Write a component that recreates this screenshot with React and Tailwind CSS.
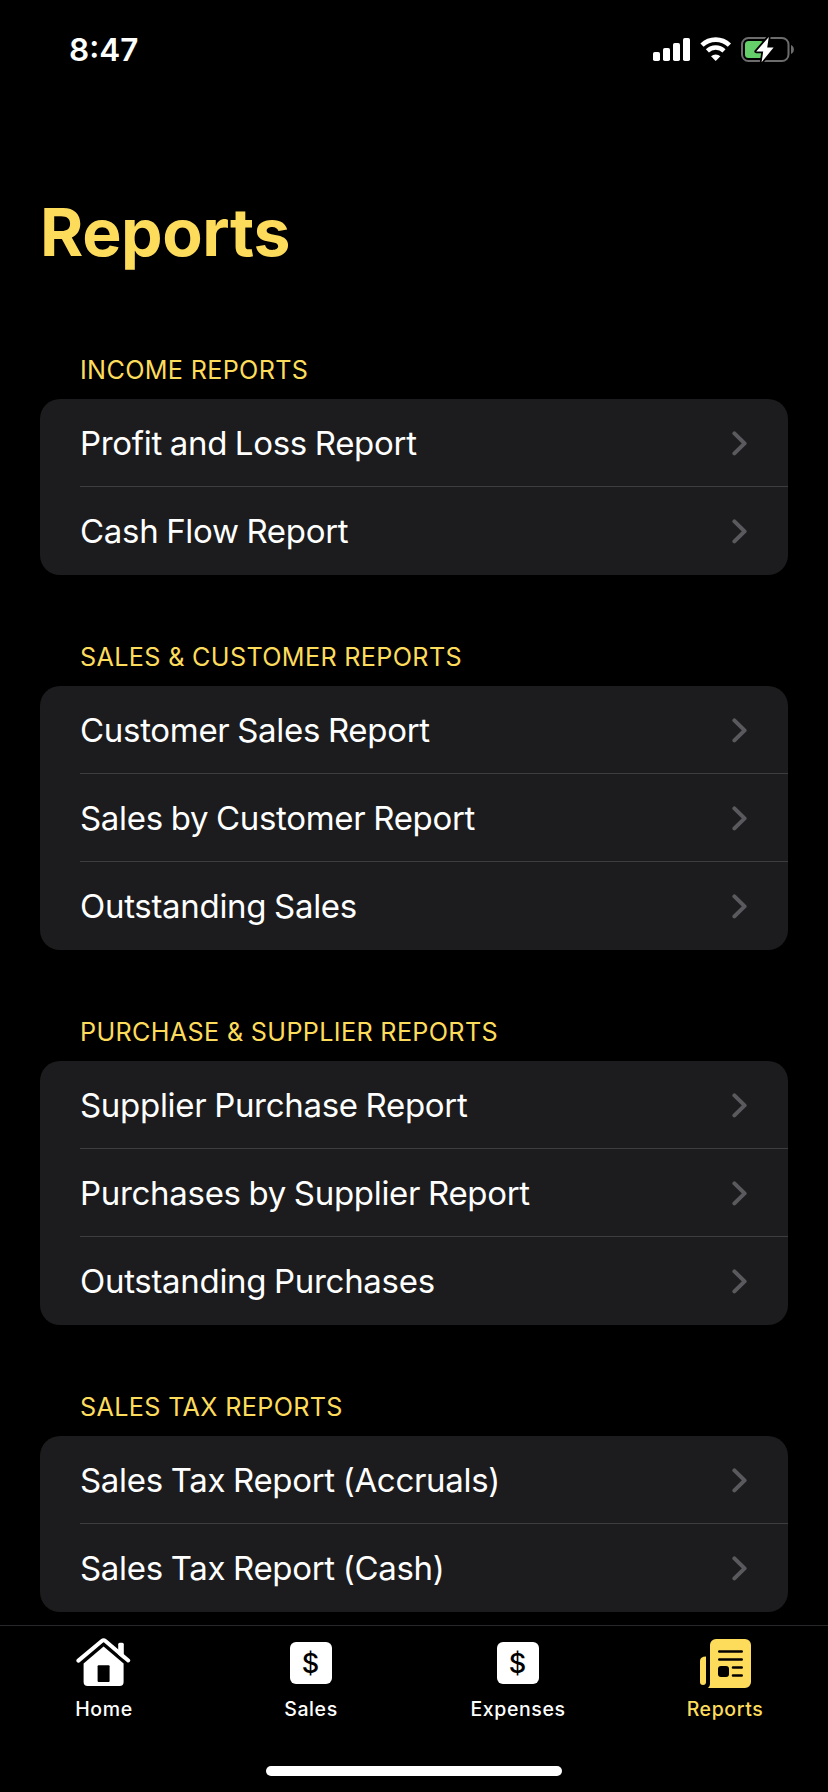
import React from "react";

const sections = [
  {
    title: "INCOME REPORTS",
    items: ["Profit and Loss Report", "Cash Flow Report"],
  },
  {
    title: "SALES & CUSTOMER REPORTS",
    items: ["Customer Sales Report", "Sales by Customer Report", "Outstanding Sales"],
  },
  {
    title: "PURCHASE & SUPPLIER REPORTS",
    items: ["Supplier Purchase Report", "Purchases by Supplier Report", "Outstanding Purchases"],
  },
  {
    title: "SALES TAX REPORTS",
    items: ["Sales Tax Report (Accruals)", "Sales Tax Report (Cash)"],
  },
];

const StatusBar = () => (
  <div className="flex h-[100px] items-center justify-between pl-[69px] pr-[34px]">
    <span className="text-[31.5px] leading-[40px] font-semibold text-white">8:47</span>
    <div className="flex items-center">
      <svg width="38" height="26" viewBox="0 0 38 26" fill="#fff">
        <rect x="0" y="15" width="7" height="9" rx="1.8" />
        <rect x="10" y="11" width="7" height="13" rx="1.8" />
        <rect x="20" y="6" width="7" height="18" rx="1.8" />
        <rect x="30" y="1" width="7" height="23" rx="1.8" />
      </svg>
      <svg className="ml-[9px]" width="32" height="26" viewBox="0 0 32 26" fill="none">
        <path d="M2 8.2A19.6 19.6 0 0 1 29.4 8.2" stroke="#fff" strokeWidth="4.6" />
        <path d="M7.4 13.9A12 12 0 0 1 24 13.9" stroke="#fff" strokeWidth="4.4" />
        <path d="M15.7 24L11 19.3A7 7 0 0 1 20.4 19.3Z" fill="#fff" />
      </svg>
      <svg className="ml-[9px]" width="53" height="28" viewBox="0 0 53 28" fill="none">
        <rect x="1" y="2" width="46.5" height="23" rx="6.5" stroke="#6c6c6c" strokeWidth="2" />
        <path d="M50 9C53.8 10.5 53.8 16.5 50 18Z" fill="#6c6c6c" />
        <rect x="4" y="5" width="19" height="17" rx="3.5" fill="#65cf6a" />
        <path
          d="M27.8 1L15.2 15.4H22.2L20.6 26.2L32.6 11.6H26.2Z"
          fill="#fff"
          stroke="#000"
          strokeWidth="3.6"
          strokeLinejoin="round"
          paintOrder="stroke"
        />
      </svg>
    </div>
  </div>
);

const Chevron = () => (
  <svg width="16" height="26" viewBox="0 0 16 26" fill="none">
    <path d="M2.4 3.4L12.6 13.4L2.4 23.4" stroke="#5a5a5e" strokeWidth="4" strokeLinecap="round" strokeLinejoin="round" />
  </svg>
);

const Section = ({ title, items }) => (
  <section>
    <h2 className="h-[29px] pl-10 text-[25.2px] leading-[29px] tracking-[0.33px] text-[#fddc5c]">{title}</h2>
    <ul className="mt-[14px] rounded-[20px] bg-[#1c1c1e]">
      {items.map((item) => (
        <li key={item} className="group pl-10">
          <div className="flex h-[88px] items-center justify-between border-b border-[#3d3d40] pr-10 group-last:border-transparent">
            <span className="text-[33px] leading-[44px] tracking-[-0.3px] text-white [word-spacing:-1.2px]">{item}</span>
            <Chevron />
          </div>
        </li>
      ))}
    </ul>
  </section>
);

const HomeIcon = () => (
  <svg width="56" height="52" viewBox="0 0 56 52" fill="none">
    <path d="M42.2 7.2a1.5 1.5 0 0 1 1.5-1.5h2.6a1.5 1.5 0 0 1 1.5 1.5v15l-5.6-4.6z" fill="#fff" />
    <path d="M2.4 23.6L25.8 4Q27.6 2.6 29.4 4L52.2 23.4" stroke="#fff" strokeWidth="4" strokeLinecap="round" />
    <path d="M27.6 9.4L47.6 26.4V45a4 4 0 0 1-4 4H11.6a4 4 0 0 1-4-4V26.4Z" fill="#fff" />
    <rect x="21.6" y="28.3" width="12" height="16.7" rx="1" fill="#000" />
  </svg>
);

const DollarIcon = () => (
  <div className="flex h-[42px] w-[42px] items-center justify-center rounded-[6px] bg-white text-[27px] leading-none font-medium text-black">
    $
  </div>
);

const NewsIcon = () => (
  <svg width="52" height="50" viewBox="0 0 52 50" fill="none">
    <path d="M7 18.5V44a3 3 0 0 1-6 0V23Q1 18.5 7 18.5Z" fill="#fddc5c" />
    <path d="M17 1H46a6 6 0 0 1 6 6V44a6 6 0 0 1-6 6H9Q11 48.5 11 46V7a6 6 0 0 1 6-6Z" fill="#fddc5c" />
    <path d="M20.3 13.5H42.7M20.3 21.5H42.7M34 29.5H42.7M34 37.5H42.7" stroke="#000" strokeWidth="2.6" strokeLinecap="round" />
    <rect x="19" y="28" width="11" height="11" rx="3" fill="#000" />
  </svg>
);

const tabs = [
  { label: "Home", icon: HomeIcon },
  { label: "Sales", icon: DollarIcon },
  { label: "Expenses", icon: DollarIcon },
  { label: "Reports", icon: NewsIcon, active: true },
];

const TabBar = () => (
  <nav className="h-[167px] border-t border-[#272729]">
    <div className="grid grid-cols-4 pt-[11px]">
      {tabs.map(({ label, icon: Icon, active }) => (
        <div key={label} className="flex flex-col items-center">
          <div className="flex h-[52px] items-center">
            <Icon />
          </div>
          <span
            className={`mt-[8px] pl-px text-[19.5px] leading-[24px] font-medium tracking-[0.6px] ${
              active ? "text-[#fddc5c]" : "text-white"
            }`}
          >
            {label}
          </span>
        </div>
      ))}
    </div>
    <div className="mx-auto mt-[45px] h-[10px] w-[296px] rounded-full bg-white" />
  </nav>
);

const App = () => {
  return (
    <div className="flex h-[1792px] w-[828px] flex-col overflow-hidden bg-black font-['Inter',sans-serif]">
      <StatusBar />
      <main className="h-[1525px] px-10 pt-[92px]">
        <h1 className="h-[80px] text-[66px] leading-[80px] font-bold tracking-[-0.4px] text-[#fddc5c]">Reports</h1>
        <div className="flex flex-col gap-[68px] pt-[84px]">
          {sections.map((s) => (
            <Section key={s.title} title={s.title} items={s.items} />
          ))}
        </div>
      </main>
      <TabBar />
    </div>
  );
};

export default App;
